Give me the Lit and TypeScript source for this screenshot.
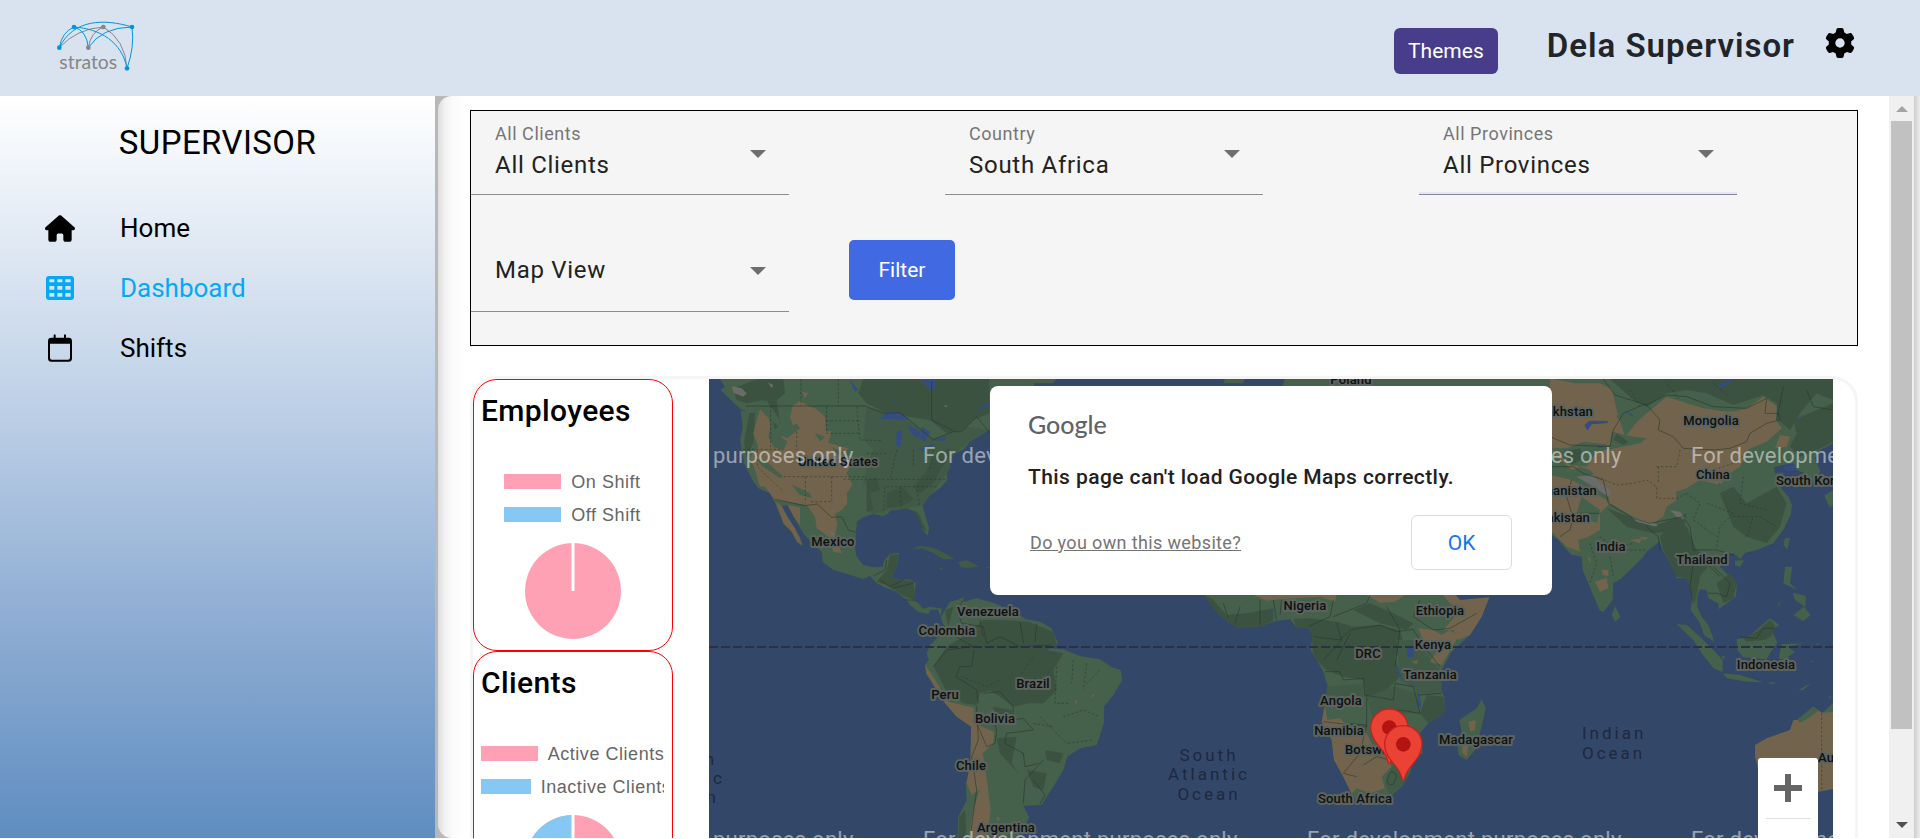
import { LitElement, html, svg, css } from "lit";
import { customElement, property } from "lit/decorators.js";

type Label = [text: string, x: number, y: number, anchor?: "start" | "middle" | "end"];

const COUNTRIES: Label[] = [
  ["United States", 838, 466],
  ["Mexico", 833, 546],
  ["Venezuela", 988, 616],
  ["Colombia", 947, 635],
  ["Brazil", 1033, 688],
  ["Peru", 945, 699],
  ["Bolivia", 995, 723],
  ["Chile", 971, 770],
  ["Argentina", 1006, 832],
  ["Poland", 1351, 384],
  ["Nigeria", 1305, 610],
  ["Ethiopia", 1440, 615],
  ["Kenya", 1433, 649],
  ["DRC", 1368, 658],
  ["Tanzania", 1430, 679],
  ["Angola", 1341, 705],
  ["Namibia", 1339, 735],
  ["Botswana", 1345, 754, "start"],
  ["Madagascar", 1476, 744],
  ["South Africa", 1355, 803],
  ["Kazakhstan", 1593, 416, "end"],
  ["Mongolia", 1711, 425],
  ["China", 1713, 479],
  ["South Korea", 1776, 485, "start"],
  ["Afghanistan", 1597, 495, "end"],
  ["Pakistan", 1590, 522, "end"],
  ["India", 1611, 551],
  ["Thailand", 1702, 564],
  ["Indonesia", 1766, 669],
  ["Australia", 1818, 762, "start"],
];

const OCEANS: Label[] = [
  ["South", 1209, 761],
  ["Atlantic", 1209, 780],
  ["Ocean", 1209, 800],
  ["Indian", 1582, 739, "start"],
  ["Ocean", 1582, 759, "start"],
  ["South", 717, 765, "end"],
  ["Pacific", 725, 784, "end"],
  ["Ocean", 719, 803, "end"],
];

const WATERMARK_COLUMNS = [539, 923, 1307, 1691];
const WATERMARK_ROWS = [463, 847];

@customElement("world-map")
class WorldMap extends LitElement {
  static styles = css`
    :host { display: block; height: 750px; background: #334769; position: relative; overflow: hidden; }
    .map { display: block; width: 100%; height: 100%; font-family: Roboto, sans-serif; }
    .land { fill: #45604b; }
    .forest { fill: #3c5241; }
    .mid { fill: #415a47; }
    .dry { fill: #72644c; }
    .water { fill: #334d80; }
    .peak { fill: #6b6b68; }
    .border { fill: none; stroke: #26312a; stroke-width: 2; stroke-linejoin: round; opacity: 0.8; }
    .region { fill: none; stroke: #26312a; stroke-width: 2; stroke-dasharray: 7 6; opacity: 0.75; }
    .equator { stroke: #2b3145; stroke-width: 2; stroke-dasharray: 9 3; }
    .country { font-size: 13px; font-weight: 500; letter-spacing: 0.0125em; fill: #0e1110; stroke: #5d635e; stroke-width: 4px; stroke-linejoin: round; paint-order: stroke; }
    .ocean { font-size: 17px; letter-spacing: 3px; fill: #1d2940; }
    .watermark { font-size: 22px; letter-spacing: 0.0125em; fill: rgba(255, 255, 255, 0.5); }
    .pin { fill: #ea4335; stroke: #c5221f; stroke-width: 4; }
    .dot { fill: #b31412; }
    .dialog {
      position: absolute; top: 7px; left: 50%; transform: translateX(-50%);
      box-sizing: border-box; width: 562px; max-width: 90%; padding: 20px 40px 25px 38px;
      background: #fff; border-radius: 8px; font-family: Roboto, sans-serif;
    }
    .brand { font-family: Lato, sans-serif; font-size: 25px; line-height: 36px; font-weight: 500; color: #5f6368; }
    .message { margin: 21px 0 0; font-size: 21px; line-height: 28px; font-weight: 500; letter-spacing: 0.02em; color: #212121; }
    .actions { display: flex; justify-content: space-between; align-items: center; margin-top: 24px; }
    .help { font-size: 18px; letter-spacing: 0.02em; color: #757575; text-decoration: underline; margin-left: 2px; }
    .ok {
      width: 101px; height: 55px; background: #fff; border: 1px solid #dadce0; border-radius: 6px;
      font: 400 21px/24px Roboto, sans-serif; color: #1a73e8;
    }
    .zoom { position: absolute; right: 15px; top: 379px; width: 60px; background: #fff; border-radius: 3px; display: flex; flex-direction: column; align-items: center; }
    .step { width: 60px; height: 60px; padding: 0; border: 0; background: none; display: grid; place-items: center; }
    .rule { width: 45px; height: 1px; background: #e0e0e0; }
  `;

  private label(cls: string, [text, x, y, anchor = "middle"]: Label) {
    return svg`<text class=${cls} x=${x} y=${y} text-anchor=${anchor}>${text}</text>`;
  }

  private pin(x: number, y: number) {
    return svg`<g transform="translate(${x} ${y})">
      <path class="pin" d="M0 108C-6 108 -2 92 -18 72C-32 54 -56 32 -56 0A56 56 0 0 1 56 0C56 32 32 54 18 72C2 92 6 108 0 108Z"/>
      <circle class="dot" r="22"/>
    </g>`;
  }

  render() {
    return html`
      <svg class="map" viewBox="709 379 1124 750" preserveAspectRatio="xMidYMin slice" role="img" aria-label="World map">
        <g transform="translate(700 370) scale(.33333)">
          <path class="land" d="M55 20L75 50 62 60 98 95 122 118 138 124 122 122 128 170 120 210 132 280 160 335 175 355 210 370 225 400 238 432 252 462 275 485 290 515 306 528 300 500 280 470 262 440 247 408 265 405 280 440 310 490 335 520 365 545 368 575 400 600 440 612 490 627 510 618 530 640 560 655 590 665 620 690 630 705 655 725 685 732 690 720 712 718 722 740 726 716 690 710 670 716 655 700 640 690 648 640 630 628 600 630 575 622 590 590 598 548 570 552 552 572 548 590 520 592 490 585 470 560 465 530 468 485 470 455 490 442 520 432 550 438 565 430 570 422 620 415 645 425 660 450 668 480 682 497 688 475 675 435 668 405 690 375 720 355 742 330 740 310 752 290 745 275 765 250 790 240 810 215 868 180 900 150 1002 60 1002 20Z"/>
          <path class="mid" d="M500 110L560 125 640 160 700 205 740 190 800 170 868 180 810 215 765 250 745 275 752 290 740 310 690 375 668 405 620 415 570 420 520 432 500 420 510 350 490 340 500 290 520 240 490 210Z"/>
          <path class="forest" d="M490 27L660 27 690 62 708 27 868 27 868 130 820 150 790 180 740 190 690 150 625 140 560 130 500 100 475 70ZM175 27L250 27 255 70 230 90 240 160 225 180 210 110 190 90 140 100 110 90 100 55ZM148 130L165 128 160 220 140 260 132 215ZM700 260L745 235 760 250 720 300 700 340 660 370 640 350 675 310ZM500 330L530 320 540 360 510 370 520 420 500 425ZM560 370L610 350 640 390 600 410 560 415ZM640 420L655 430 680 485 670 480ZM570 555L596 552 590 590 575 620 600 632 640 632 645 690 615 680 560 645 530 635 560 600Z"/>
          <path class="dry" d="M180 118L206 145 212 165 205 200 222 232 250 240 262 215 242 200 282 178 270 140 278 108 300 92 330 110 345 115 375 140 378 185 395 182 385 218 445 235 430 262 450 290 440 310 458 345 440 370 442 400 425 420 405 432 412 462 405 500 425 550 400 545 385 500 350 475 345 440 320 405 225 390 195 350 180 350 165 300 150 262 175 230 160 190ZM228 395L245 410 262 440 285 475 308 525 292 515 275 485 250 460ZM262 405L300 412 300 465 285 445ZM305 65L325 70 315 85Z"/>
          <path class="land" d="M275 345L300 355 330 370 335 384 300 375ZM165 265L200 275 250 320 240 325 190 290ZM195 85L240 150 235 170 205 140ZM430 440L470 450 466 530 450 500ZM240 195L290 160 300 175 262 205ZM345 190L375 200 360 215ZM395 232L430 245 420 262Z"/>
          <path class="peak" d="M95 48L125 55 140 70 130 80 100 68ZM205 38L220 45 215 55ZM385 480L405 490 400 500ZM732 105L745 108 736 112Z"/>
          <path class="water" d="M540 147L565 125 600 128 628 150 590 148ZM590 185L608 180 600 235 588 225ZM622 163L662 185 655 208 632 188ZM665 170L690 185 675 215 660 205ZM655 237L705 218 700 228 665 242ZM700 212L738 200 735 212ZM662 27L706 27 705 50 694 64 680 50ZM448 27L475 60 465 65ZM575 90L590 95 580 98ZM822 122L868 95 868 108Z"/>
          <path class="mid" d="M635 538L660 527 700 533 735 550 764 568 730 568 700 550 665 535ZM775 576L800 570 838 590 800 594 782 592ZM715 592L732 596 722 599ZM853 592L868 592 868 596Z"/>
          <path class="land" d="M722 740L750 695 778 688 798 678 790 695 830 685 880 698 920 715 980 748 1020 755 1055 775 1074 820 1050 835 1090 838 1140 858 1200 868 1235 892 1262 900 1267 930 1240 975 1212 1010 1212 1060 1190 1125 1140 1135 1102 1160 1090 1200 1060 1250 1025 1304 970 1308 987 1340 975 1375 950 1404 940 1480 770 1480 772 1404 775 1340 800 1290 797 1240 810 1200 812 1120 815 1070 770 1040 735 1000 715 950 678 912 675 885 686 870 680 850 690 825 725 790 730 765Z"/>
          <path class="forest" d="M740 830L790 800 850 750 905 750 985 755 1060 785 1070 825 1040 840 1090 850 1060 900 1070 960 1030 1000 985 1000 940 1010 900 980 870 962 840 970 830 1005 790 1000 745 975 712 910 700 890ZM735 720L760 710 745 770ZM880 1010L935 1020 940 1050 890 1060ZM890 1105L950 1100 935 1180 960 1215 900 1150ZM1035 1140L1090 1150 1080 1180 1040 1170ZM980 1200L1040 1210 1030 1260 1000 1250ZM778 1340L795 1320 800 1404 775 1404Z"/>
          <path class="dry" d="M675 885L690 905 715 945 745 995 822 1013 820 1060 882 1085 880 1120 848 1150 862 1240 872 1320 862 1404 805 1404 820 1320 838 1260 815 1275 800 1240 812 1170 813 1070 770 1040 735 1000 700 945 680 912ZM1125 990L1133 992 1128 1005ZM1175 972L1182 975 1178 985ZM890 1340L900 1345 893 1355Z"/>
          <path class="border" d="M138 108L495 108 550 130 600 128 640 160 700 210 760 185 785 185 830 140 868 187M225 388L315 407 352 402 395 442 425 440 445 480 468 487M695 35L695 150 760 182M520 618L555 600 560 570M540 630L570 650 610 630M575 655L640 640M615 690L645 690M798 678L770 720 785 760 850 770M730 765L750 790 820 830 740 840 700 890M822 840L815 890 780 890 768 920 830 960 835 1000M850 770L860 820 900 800 960 830 1055 825M850 800L840 750M960 755L970 820M1010 760L1005 815M830 1010L830 1060 860 1130 885 1120 890 1080 880 1050M850 970L900 965 940 1010 938 1050 970 1045 1000 1080 920 1090 915 1120 970 1150 975 1190 1015 1180M832 1060L835 1110 815 1160M1000 1230L1035 1275 1020 1302M970 1300L975 1230 1030 1170M815 1160L830 1260 810 1404"/>
          <path class="region" d="M303 27L303 108M415 27L415 108M212 108L212 240M290 185L290 240M380 110L380 190 480 190M378 152L475 152M130 238L250 238M252 320L500 320M316 320L316 400M395 320L395 395 330 395M172 240L172 290 250 365M470 110L480 210 545 212M500 250L560 250M500 270L410 270M430 328L740 328M560 350L710 350M555 350L550 430M600 350L605 415M650 360L660 410M590 240L570 330M640 240L640 290M700 240L690 300M785 920L860 950 900 930M965 910L1000 860M1070 890L1065 1000 1110 1000M1120 870L1115 940M1160 880L1150 960M1090 1040L1150 1020 1200 1040M1020 1040L1060 1080 1100 1120 1180 1110M1000 1060L1060 1070M1200 900L1160 940"/>
        </g>
        <g transform="translate(1080 580) scale(.33333)">
          <path class="land" d="M-150 -620L-60 -620 -80 -590 -160 -590ZM440 -620L500 -620 490 -590 430 -590ZM620 -620L1700 -620 1700 -560 600 -560Z"/>
          <path class="land" d="M365 30L400 85 430 115 475 145 545 138 590 122 630 118 650 143 685 145 698 165 692 210 710 240 730 275 747 330 732 380 725 425 755 480 762 540 790 590 815 642 828 660 870 655 930 650 965 620 990 580 1000 540 1028 520 1026 490 1020 460 1045 430 1093 400 1093 350 1080 320 1085 270 1115 215 1170 165 1205 110 1228 52 1160 62 1138 58 1115 30Z"/>
          <path class="forest" d="M640 118L690 115 770 125 820 140 900 135 960 150 970 190 945 230 960 290 940 310 900 350 860 345 850 300 790 290 740 270 700 230 695 165 685 145 650 143ZM375 45L400 60 440 105 500 100 580 85 580 122 545 138 475 145 430 115 400 85ZM820 90L870 70 940 100 1000 130 980 150 900 130ZM1040 345L1090 350 1093 400 1045 430 1020 400Z"/>
          <path class="mid" d="M950 180L1010 180 1060 250 1085 280 1085 340 1040 345 1010 330 960 300ZM860 350L940 320 1010 340 1020 400 980 400 920 400 880 420ZM935 560L990 540 985 590 960 620 930 645 915 610ZM740 320L850 310 860 350 740 345Z"/>
          <path class="dry" d="M1085 40L1118 35 1140 60 1228 52 1205 110 1170 165 1135 180 1120 150 1090 150 1120 115 1140 90 1110 70ZM1015 145L1060 150 1085 165 1110 150 1135 170 1085 255 1050 245 1075 205 1030 185ZM735 378L742 420 780 415 800 435 860 460 880 500 920 530 935 560 905 590 915 625 870 640 830 625 815 642 790 590 762 540 755 480 725 425ZM520 45L770 45 765 65 720 50 600 58 560 62ZM860 45L975 45 945 65 900 68ZM995 245L1015 240 1010 252Z"/>
          <path class="land" d="M1205 358L1217 385 1205 440 1185 510 1160 540 1135 525 1132 490 1145 455 1138 420 1160 405 1190 385Z"/>
          <path class="dry" d="M1165 425L1188 420 1185 450 1172 455ZM1145 500L1165 495 1160 530 1148 520Z"/>
          <path class="water" d="M980 205L1005 200 1000 232 982 232ZM1010 330L1018 340 1024 385 1014 375ZM568 95L578 98 576 110ZM948 255L955 260 965 300 955 285Z"/>
          <path class="border" d="M430 70L445 115M480 80L465 130M540 60L540 135M580 60L590 120M605 60L600 105M685 140L750 110 760 60M700 170L780 180 810 150 900 135 950 155 1000 148M760 110L860 70 870 45M770 130L785 180 730 240M770 240L810 160M735 275L780 275 790 300 850 295 855 345 940 360 945 310 1000 320 1020 400 960 390 920 410M860 345L860 440 730 425M800 430L860 435 840 520 790 580 830 590M850 555L890 530 930 540M945 260L960 150 920 80M1000 150L1040 210 1080 260M1020 60L1000 110 1060 150 1110 145M1015 345L1085 340M925 590A12 14 0 1 0 945 600A12 14 0 1 0 925 590M1110 145L1190 100"/>
        </g>
        <g transform="translate(1500 370) scale(.33333)">
          <path class="land" d="M-60 20L1010 20 1010 215 960 240 945 265 962 305 930 345 915 310 890 300 880 280 850 285 822 292 825 310 852 308 835 345 865 380 876 405 872 435 850 480 820 520 770 540 735 548 722 568 700 550 680 555 660 590 690 620 711 640 708 680 680 700 656 718 655 700 625 685 620 660 600 658 592 680 592 710 605 740 625 765 638 800 641 815 612 795 600 760 572 720 578 670 560 625 530 625 522 600 490 545 478 515 440 545 430 560 400 590 365 625 340 640 338 690 310 726 298 720 265 640 248 600 245 560 215 555 200 540 175 510 150 492 -60 430Z"/>
          <path class="forest" d="M330 27L999 27 999 90 950 70 900 130 870 180 835 150 830 100 790 75 700 105 620 70 560 60 500 70 440 110 400 90ZM880 150L999 100 999 215 950 240 900 260 870 230 890 190ZM560 470L590 540 640 570 600 620 585 700 560 625 530 620 490 540 480 500 520 450ZM660 370L700 350 740 400 830 350 860 400 840 470 800 520 740 500 700 470 680 420ZM690 610L710 640 700 685 670 700 650 640ZM320 415L400 445 460 470 560 430 550 480 460 490 380 470Z"/>
          <path class="dry" d="M160 27L225 40 300 40 350 65 370 100 350 140 385 180 440 130 500 80 560 100 610 115 700 125 740 115 790 80 830 108 828 150 845 175 800 215 745 238 720 290 690 310 660 345 600 330 560 355 528 365 530 390 500 410 490 440 460 460 400 440 330 400 320 360 270 300 240 290 215 300 150 240 150 27ZM150 315L215 330 320 390 330 400 300 430 300 480 265 500 235 510 240 545 200 530 150 480ZM840 195L870 200 860 230 825 235Z"/>
          <path class="land" d="M155 235L200 235 250 215 330 225 335 185 400 200 440 205 420 220 370 230 290 245 260 290 210 285ZM330 27L380 90 420 110 400 170 375 200 350 120ZM245 380L300 420 290 460 230 430ZM575 80L640 100 690 125 640 120Z"/>
          <path class="forest" d="M190 245L240 235 250 265 215 285ZM350 190L385 215 370 225 340 210Z"/>
          <path class="peak" d="M230 320L280 315 310 345 335 365 325 380 280 350ZM510 420L540 425 560 450 530 440ZM395 440L470 462 470 470 410 455Z"/>
          <path class="dry" d="M285 635L320 625 325 655 300 665ZM305 600L325 600 325 618 308 615ZM390 510L425 505 420 520ZM262 560L272 565 270 580ZM420 500L450 503 430 510Z"/>
          <path class="water" d="M253 165L268 152 325 153 322 160 275 163 262 182ZM650 52L690 27 700 30 670 50ZM380 125L400 135 395 140ZM290 225L310 230 298 235ZM890 150L900 140 900 155ZM848 290L880 285 890 300 860 303Z"/>
          <path class="land" d="M345 708L362 740 345 755 335 735ZM530 762L560 765 600 800 640 840 668 870 668 906 640 895 605 850 580 810ZM668 910L720 915 790 937 740 935 680 925ZM710 808L745 800 780 770 810 745 838 765 815 780 832 818 810 850 800 868 730 862 712 840ZM845 822L912 820 862 830 885 845 865 860 880 890 850 870 836 865ZM855 590L877 590 870 640 892 660 850 640ZM878 668L918 678 916 712 885 690ZM880 735L912 710 932 735 910 754ZM830 710L845 690 838 705ZM855 505L870 503 862 538 850 525ZM705 572L732 570 720 592 705 585ZM973 377L1002 358 1002 405 988 412ZM800 937L830 938 815 943ZM895 960L935 938 910 960ZM665 855L676 862 668 870ZM948 820L958 822 950 826ZM983 978L995 980 990 986ZM930 872L945 873 935 876Z"/>
          <path class="forest" d="M770 785L810 750 825 765 815 800 790 810 740 815 730 805Z"/>
          <path class="dry" d="M765 1125L800 1105 870 1080 880 1050 905 1050 940 1010 965 1028 985 1020 1010 990 1010 1255 955 1265 880 1240 800 1240 775 1200 765 1160Z"/>
          <path class="land" d="M893 1048L938 1010 955 1022 925 1045 900 1058ZM968 1028L1010 988 1010 1025Z"/>
          <path class="border" d="M310 27L345 75 440 105 480 150 475 180 520 200 550 235 640 240 690 235 740 215 750 190 800 160 840 150 835 130 795 130 800 85 740 115 640 110 560 80 500 75 440 105M150 200L210 225 330 230 340 180 370 130 440 100M150 290L220 290 250 310 310 330 325 400 400 445 450 460 550 440 570 470 580 540 650 540 700 555M215 330L200 380 215 430 300 430M180 500L210 480 220 440M440 470L475 500 480 540M580 580L570 650 580 700M640 590L690 640 680 680 650 670 625 670M610 570L660 620M850 50L830 150M999 120L940 110 920 60M720 800L770 805 790 775 822 775"/>
          <path class="region" d="M290 320L350 345 400 340 440 330 470 350 470 385 530 385 560 370M470 290L530 290 540 240M475 290L475 340M660 345L640 300 700 280 740 250M560 370L600 400 580 450 650 500M620 400L700 430 660 470 650 530M730 320L720 400 800 420M700 440L780 440 830 470M740 500L760 440M300 500L350 540 440 540M270 520L290 580 270 640M330 560L340 620M300 540L400 520M390 60L420 110M500 40L540 90M640 40L690 80M965 1030L965 1260"/>
        </g>
        <line class="equator" x1="709" y1="647" x2="1833" y2="647"></line>
        ${COUNTRIES.map((l) => this.label("country", l))}
        ${OCEANS.map((l) => this.label("ocean", l))}
        <g transform="translate(1080 580) scale(.33333)">${this.pin(928, 443)}${this.pin(970, 493)}</g>
        ${WATERMARK_ROWS.map((y) =>
          WATERMARK_COLUMNS.map((x) => this.label("watermark", ["For development purposes only", x, y, "start"])))}
      </svg>
      <div class="dialog" role="dialog" aria-label="Map notice">
        <div class="brand">Google</div>
        <p class="message">This page can't load Google Maps correctly.</p>
        <div class="actions">
          <a class="help" href="#">Do you own this website?</a>
          <button class="ok">OK</button>
        </div>
      </div>
      <div class="zoom">
        <button class="step" aria-label="Zoom in">
          <svg width="28" height="28" viewBox="0 0 28 28"><path d="M11 0h6v11h11v6H17v11h-6V17H0v-6h11z" fill="#666"/></svg>
        </button>
        <span class="rule"></span>
        <button class="step" aria-label="Zoom out">
          <svg width="28" height="28" viewBox="0 0 28 28"><path d="M0 11h28v6H0z" fill="#666"/></svg>
        </button>
      </div>
    `;
  }
}

interface Slice { label: string; color: string; }

@customElement("pie-card")
class PieCard extends LitElement {
  @property() heading = "";
  @property({ attribute: false }) slices: Slice[] = [];
  @property({ type: Boolean }) split = false;

  static styles = css`
    :host { display: block; box-sizing: border-box; height: 272px; border: 1px solid red; border-radius: 24px; padding: 13px 8px 11px 7px; background: #fff; }
    .heading { margin: 0; font: 500 30px/36px Roboto, sans-serif; letter-spacing: 0.0125em; color: #000; }
    .legend { list-style: none; margin: 36px 0 12px; padding: 0; overflow: hidden; }
    .entry { display: flex; justify-content: center; align-items: center; height: 33px; font: 18px/24px "Liberation Sans", Arial, sans-serif; letter-spacing: 0.03em; color: #666; white-space: nowrap; }
    .name { flex: none; }
    .swatch { flex: none; width: 57px; height: 15px; margin-right: 10px; }
    .pie { display: block; margin: 0 auto; }
  `;

  render() {
    const [first, second] = this.slices;
    return html`
      <h3 class="heading">${this.heading}</h3>
      <ul class="legend">
        ${this.slices.map((s) => html`<li class="entry"><span class="swatch" style="background:${s.color}"></span><span class="name">${s.label}</span></li>`)}
      </ul>
      <svg class="pie" width="96" height="96" viewBox="0 0 96 96" role="img" aria-label=${this.heading}>
        <circle cx="48" cy="48" r="48" fill=${first?.color}></circle>
        ${this.split ? svg`<path d="M48 0A48 48 0 0 0 48 96Z" fill=${second?.color}/>` : ""}
        <path d=${this.split ? "M48 0V96" : "M48 0V48"} stroke="#fff" stroke-width="3"/>
      </svg>
    `;
  }
}

const PINK = "#ffa1b5";
const BLUE = "#86c7f3";

@customElement("app-root")
class AppRoot extends LitElement {
  static styles = css`
    :host { display: flex; flex-direction: column; height: 100vh; overflow: hidden; background: #fff; font-family: Roboto, sans-serif; color: #000; }
    .topbar { flex: none; box-sizing: border-box; height: 96px; display: flex; align-items: flex-start; padding: 28px 65px 0 55px; background: #d9e3ef; }
    .logo { margin-top: -10px; margin-right: auto; overflow: visible; }
    .wordmark { font-family: Lato, sans-serif; font-size: 58px; fill: #868686; }
    .themes { height: 46px; padding: 0 14px; margin-right: 49px; border: 0; border-radius: 6px; background: #483d8b; color: #fff; font: 400 21px/24px Roboto, sans-serif; }
    .user { margin: 0 30px 0 0; font-size: 33px; line-height: 36px; font-weight: 600; letter-spacing: 0.03em; color: #212529; }
    .settings { border: 0; padding: 0; background: none; height: 30px; }
    .body { flex: 1; min-height: 0; display: flex; padding-bottom: 1px; }
    .sidebar { flex: none; width: 435px; background: linear-gradient(#fff, #bfd1e7 41%, #93b0d5 68%, #5f8dc0); }
    .role { margin: 27px 0 35px; text-align: center; font-size: 33px; line-height: 40px; font-weight: 400; letter-spacing: 0.0125em; }
    .item { display: grid; grid-template-columns: 120px 1fr; align-items: center; height: 60px; color: #000; text-decoration: none; font-size: 26px; }
    .item.active { color: #03a9f4; }
    .icon { display: grid; place-items: center; }
    .edge { flex: 1; min-width: 0; display: flex; padding-left: 3px; background: #b8b8b8; }
    .pane { flex: 1; min-width: 0; display: flex; border-radius: 14px 0 0 14px; background: linear-gradient(90deg, #dedede, #f2f2f2 7px, #fbfbfb 15px, #fff 26px); }
    .content { flex: 1; min-width: 0; overflow-y: auto; scrollbar-width: none; padding: 14px 31px 0 32px; }
    .filters { border: 1px solid #000; background: #f5f5f5; }
    .row { display: flex; align-items: center; gap: 156px; margin-bottom: 33px; }
    .row.tight { gap: 60px; }
    .field { position: relative; box-sizing: border-box; flex: 0 1 318px; height: 84px; border-bottom: 1px solid #8c8c8c; display: flex; flex-direction: column; justify-content: center; }
    .field.titled { justify-content: flex-start; padding-top: 13px; }
    .field.focused { border-bottom-color: #8585a0; box-shadow: inset 0 -2px #e6e6f3; }
    .caption { padding-left: 24px; margin-bottom: 5px; font-size: 18px; line-height: 20px; letter-spacing: 0.03em; color: #757575; }
    .select { appearance: none; width: 100%; height: 32px; padding: 0 48px 0 24px; margin: 0; border: 0; background: none; font: 24px/32px Roboto, sans-serif; letter-spacing: 0.03em; color: #222; }
    .arrow { position: absolute; right: 23px; top: 39px; border: 8px solid transparent; border-top: 8px solid #6e6e6e; border-bottom: 0; pointer-events: none; }
    .apply { width: 106px; height: 60px; border: 0; border-radius: 5px; background: #4169e1; color: #fff; font: 400 21px/24px Roboto, sans-serif; }
    .board { margin-top: 30px; display: flex; gap: 36px; padding-right: 22px; border: 3px solid #f5f5f5; border-radius: 26px; background: #fff; }
    .stats { flex: none; width: 200px; }
    .map { flex: 1; min-width: 0; }
    .scrollbar { flex: none; width: 25px; display: flex; flex-direction: column; align-items: center; background: #f0f0f0; }
    .thumb { width: 21px; flex: 0 0 82%; background: #c1c1c1; }
    .arrow-box { flex: none; height: 25px; display: grid; place-items: center; }
    .arrow-box:last-child { margin-top: auto; height: 26px; }
    .shade { flex: none; width: 6px; background: linear-gradient(90deg, #cecece, #ececec); }
  `;

  private field(id: string, value: string, caption = "", focused = false) {
    return html`
      <div class="field ${caption ? "titled" : ""} ${focused ? "focused" : ""}">
        ${caption ? html`<label class="caption" for=${id}>${caption}</label>` : ""}
        <select class="select" id=${id} aria-label=${caption || value}><option>${value}</option></select>
        <span class="arrow"></span>
      </div>`;
  }

  render() {
    return html`
      <header class="topbar">
        <svg class="logo" width="82" height="53" viewBox="165 52 246 159" role="img" aria-label="stratos">
          <g fill="none" stroke-width="3">
            <path stroke="#868686" d="M178 141Q230 84 310 79M310 79Q272 94 265 141M310 79Q376 118 381 203"/>
            <path stroke="#0095e0" d="M178 141Q186 94 222 79M178 141C220 54 315 54 396 79M222 79Q260 90 265 141M222 79C300 84 366 124 381 203M265 141Q305 80 396 79M396 79Q404 140 381 203"/>
          </g>
          <g fill="#868686"><circle cx="310" cy="79" r="7"/><circle cx="265" cy="141" r="7"/></g>
          <g fill="#0095e0"><circle cx="222" cy="79" r="7"/><circle cx="396" cy="79" r="7"/><circle cx="178" cy="141" r="7"/><circle cx="381" cy="203" r="7"/></g>
          <text class="wordmark" x="178" y="205">stratos</text>
        </svg>
        <button class="themes">Themes</button>
        <h2 class="user">Dela Supervisor</h2>
        <button class="settings" aria-label="Settings">
          <svg width="30" height="30" viewBox="0 0 512 512"><path d="M495.9 166.6c3.2 8.7 .5 18.4-6.4 24.6l-43.3 39.4c1.1 8.3 1.7 16.8 1.7 25.4s-.6 17.1-1.7 25.4l43.3 39.4c6.9 6.2 9.6 15.9 6.4 24.6c-4.4 11.9-9.7 23.3-15.8 34.3l-4.7 8.1c-6.6 11-14 21.4-22.1 31.2c-5.9 7.2-15.7 9.6-24.5 6.8l-55.7-17.7c-13.4 10.3-28.2 18.9-44 25.4l-12.5 57.1c-2 9.1-9 16.3-18.2 17.8c-13.8 2.3-28 3.5-42.5 3.5s-28.7-1.2-42.5-3.5c-9.2-1.5-16.2-8.7-18.2-17.8l-12.5-57.1c-15.8-6.5-30.6-15.1-44-25.4L83.1 425.9c-8.8 2.8-18.6 .3-24.5-6.8c-8.1-9.8-15.5-20.2-22.1-31.2l-4.7-8.1c-6.1-11-11.4-22.4-15.8-34.3c-3.2-8.7-.5-18.4 6.4-24.6l43.3-39.4C64.6 273.1 64 264.6 64 256s.6-17.1 1.7-25.4L22.4 191.2c-6.9-6.2-9.6-15.9-6.4-24.6c4.4-11.9 9.7-23.3 15.8-34.3l4.7-8.1c6.6-11 14-21.4 22.1-31.2c5.9-7.2 15.7-9.6 24.5-6.8l55.7 17.7c13.4-10.3 28.2-18.9 44-25.4l12.5-57.1c2-9.1 9-16.3 18.2-17.8C227.3 1.2 241.5 0 256 0s28.7 1.2 42.5 3.5c9.2 1.5 16.2 8.7 18.2 17.8l12.5 57.1c15.8 6.5 30.6 15.1 44 25.4l55.7-17.7c8.8-2.8 18.6-.3 24.5 6.8c8.1 9.8 15.5 20.2 22.1 31.2l4.7 8.1c6.1 11 11.4 22.4 15.8 34.3zM256 336a80 80 0 1 0 0-160 80 80 0 1 0 0 160z"/></svg>
        </button>
      </header>
      <div class="body">
        <nav class="sidebar">
          <h1 class="role">SUPERVISOR</h1>
          <a class="item" href="#"><span class="icon">
            <svg width="30" height="27" viewBox="0 0 576 512"><path d="M575.8 255.5c0 18-15 32.1-32 32.1l-32 0 .7 160.2c0 2.7-.2 5.4-.5 8.1l0 16.2c0 22.1-17.9 40-40 40l-16 0c-1.1 0-2.2 0-3.3-.1c-1.4 .1-2.8 .1-4.2 .1L416 512l-24 0c-22.1 0-40-17.9-40-40l0-24 0-64c0-17.7-14.3-32-32-32l-64 0c-17.7 0-32 14.3-32 32l0 64 0 24c0 22.1-17.9 40-40 40l-24 0-31.9 0c-1.5 0-3-.1-4.5-.2c-1.2 .1-2.4 .2-3.6 .2l-16 0c-22.1 0-40-17.9-40-40l0-112c0-.9 0-1.9 .1-2.8l0-69.7-32 0c-18 0-32-14-32-32.1c0-9 3-17 10-24L266.4 8c7-7 15-8 22-8s15 2 21 7L564.8 231.5c8 7 12 15 11 24z"/></svg>
          </span>Home</a>
          <a class="item active" href="#"><span class="icon">
            <svg width="28" height="24" viewBox="0 0 84 72"><path fill="#03a9f4" fill-rule="evenodd" d="M9 0H75A9 9 0 0 1 84 9V63A9 9 0 0 1 75 72H9A9 9 0 0 1 0 63V9A9 9 0 0 1 9 0ZM10 10V19H25V10ZM34 10V19H49V10ZM58 10V19H74V10ZM10 30V41H25V30ZM34 30V41H49V30ZM58 30V41H74V30ZM10 51V62H25V51ZM34 51V62H49V51ZM58 51V62H74V51Z"/></svg>
          </span>Dashboard</a>
          <a class="item" href="#"><span class="icon">
            <svg width="24" height="28" viewBox="0 0 72 84"><path fill-rule="evenodd" d="M17 3Q20 -2 23 3V11H48V3Q51 -2 54 3V11H62A10 10 0 0 1 72 21V74A10 10 0 0 1 62 83H10A10 10 0 0 1 0 74V21A10 10 0 0 1 10 11H17ZM6 29V71A6 6 0 0 0 12 77H60A6 6 0 0 0 66 71V29Z"/></svg>
          </span>Shifts</a>
        </nav>
        <div class="edge">
          <div class="pane">
            <main class="content">
              <form class="filters">
                <div class="row">
                  ${this.field("clients", "All Clients", "All Clients")}
                  ${this.field("country", "South Africa", "Country")}
                  ${this.field("province", "All Provinces", "All Provinces", true)}
                </div>
                <div class="row tight">
                  ${this.field("view", "Map View")}
                  <button class="apply" type="button">Filter</button>
                </div>
              </form>
              <section class="board">
                <div class="stats">
                  <pie-card heading="Employees" .slices=${[{ label: "On Shift", color: PINK }, { label: "Off Shift", color: BLUE }]}></pie-card>
                  <pie-card heading="Clients" split .slices=${[{ label: "Active Clients", color: PINK }, { label: "Inactive Clients", color: BLUE }]}></pie-card>
                </div>
                <world-map class="map"></world-map>
              </section>
            </main>
            <div class="scrollbar" aria-hidden="true">
              <span class="arrow-box"><svg width="12" height="6" viewBox="0 0 12 6"><path d="M6 0L12 6H0Z" fill="#a3a3a3"/></svg></span>
              <span class="thumb"></span>
              <span class="arrow-box"><svg width="12" height="6" viewBox="0 0 12 6"><path d="M0 0H12L6 6Z" fill="#505050"/></svg></span>
            </div>
            <div class="shade"></div>
          </div>
        </div>
      </div>
    `;
  }
}
